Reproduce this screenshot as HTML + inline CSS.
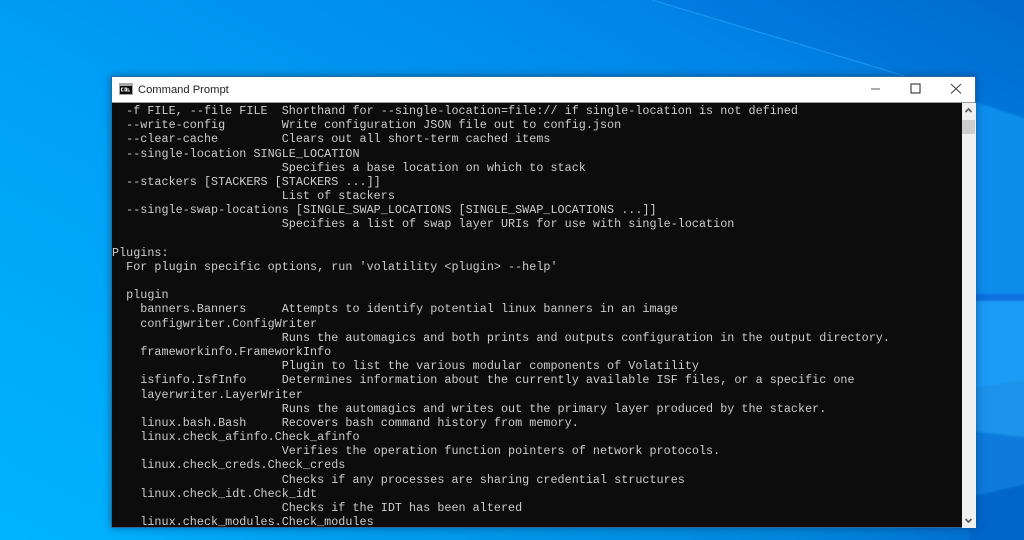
<!DOCTYPE html>
<html>
<head>
<meta charset="utf-8">
<style>
html,body{margin:0;padding:0;width:1024px;height:540px;overflow:hidden;background:#0097f0}
.abs{position:absolute}
#win{left:111px;top:76px;width:865px;height:451.500px;background:#fff;box-shadow:0 0 8px rgba(0,40,90,.5);outline:1px solid #2c6a94;outline-offset:-1px}
#title{left:138px;top:83px;font:11.2px/14px "Liberation Sans",sans-serif;color:#222;white-space:pre}
#con{left:112px;top:103px;width:850px;height:424px;background:#0c0c0c;overflow:hidden}
#con div{position:absolute;left:0;height:14px;margin-top:1px;font:11.75px/14px "Liberation Mono",monospace;letter-spacing:.021px;color:#cccccc;white-space:pre;filter:blur(.25px)}
#sb{left:962px;top:103px;width:14px;height:424.500px;background:#f0f0f0}
</style>
</head>
<body>
<svg class="abs" style="left:0;top:0" width="1024" height="540" viewBox="0 0 1024 540">
<defs>
<linearGradient id="g" x1="0" y1="1" x2="1" y2="0">
<stop offset="0" stop-color="#00b4ff"/>
<stop offset=".45" stop-color="#00a0f6"/>
<stop offset=".8" stop-color="#0086e8"/>
<stop offset="1" stop-color="#0068cc"/>
</linearGradient>
<linearGradient id="b" x1="0" y1="0" x2="1" y2="0">
<stop offset="0" stop-color="#0090e0" stop-opacity="0"/>
<stop offset=".3" stop-color="#0094e4" stop-opacity=".6"/>
<stop offset=".8" stop-color="#0086dc"/>
<stop offset="1" stop-color="#0470d0"/>
</linearGradient>
<filter id="s" x="-10%" y="-10%" width="120%" height="120%"><feGaussianBlur stdDeviation="1"/></filter>
</defs>
<rect width="1024" height="540" fill="url(#g)"/>
<polygon points="650,0 1024,0 1024,150 905,76" fill="#0070d8" opacity=".35"/>
<rect x="100" y="520" width="880" height="20" fill="url(#b)"/>
<g filter="url(#s)">
<polygon points="970,100 1030,120 1030,296 970,296" fill="#0a8eec"/>
<rect x="970" y="294" width="60" height="7" fill="#0a70de"/>
<polygon points="970,301 1030,301 1030,380 970,388" fill="#1a9cf4"/>
<polygon points="970,388 1030,380 1030,438 970,431" fill="#1a92ea"/>
<polygon points="970,431 1030,438 1030,483 970,497" fill="#0a7adc"/>
<polygon points="970,497 1030,483 1030,545 970,545" fill="#0666c8"/>
</g>
<line x1="652" y1="0" x2="905" y2="76" stroke="#1f9cf4" stroke-width="1.200" opacity=".8"/>
</svg>

<div id="win" class="abs"></div>
<div class="abs" style="left:112px;top:102px;width:863px;height:1px;background:#a0a0a0"></div>

<svg class="abs" style="left:119px;top:83px" width="14" height="12" viewBox="0 0 14 12">
<rect width="14" height="12" fill="#a8a8a8"/>
<rect x="1" y="3" width="12" height="8" fill="#0c0c0c"/>
<path d="M2.500 5H4.500M2.500 5V8H4.500M6 5H7.500V8H6ZM9 5V8H11" stroke="#e8e8e8" stroke-width="1" fill="none"/>
</svg>
<div id="title" class="abs">Command Prompt</div>

<svg class="abs" style="left:860px;top:76px" width="116" height="27" viewBox="0 0 116 27">
<path d="M11 13H20" stroke="#8a8a8a" stroke-width="1.400" fill="none"/>
<rect x="51" y="8" width="9" height="9" stroke="#333" stroke-width="1.100" fill="none"/>
<path d="M91 8L101 17.500M101 8L91 17.500" stroke="#444" stroke-width="1.100" fill="none"/>
</svg>

<div id="con" class="abs">
<div style="top:0px">  -f FILE, --file FILE  Shorthand for --single-location=file:// if single-location is not defined</div>
<div style="top:14.200px">  --write-config        Write configuration JSON file out to config.json</div>
<div style="top:28.300px">  --clear-cache         Clears out all short-term cached items</div>
<div style="top:42.500px">  --single-location SINGLE_LOCATION</div>
<div style="top:56.700px">                        Specifies a base location on which to stack</div>
<div style="top:70.900px">  --stackers [STACKERS [STACKERS ...]]</div>
<div style="top:85px">                        List of stackers</div>
<div style="top:99.200px">  --single-swap-locations [SINGLE_SWAP_LOCATIONS [SINGLE_SWAP_LOCATIONS ...]]</div>
<div style="top:113.400px">                        Specifies a list of swap layer URIs for use with single-location</div>
<div style="top:141.700px">Plugins:</div>
<div style="top:155.900px">  For plugin specific options, run 'volatility &lt;plugin&gt; --help'</div>
<div style="top:184.300px">  plugin</div>
<div style="top:198.400px">    banners.Banners     Attempts to identify potential linux banners in an image</div>
<div style="top:212.600px">    configwriter.ConfigWriter</div>
<div style="top:226.800px">                        Runs the automagics and both prints and outputs configuration in the output directory.</div>
<div style="top:241px">    frameworkinfo.FrameworkInfo</div>
<div style="top:255.100px">                        Plugin to list the various modular components of Volatility</div>
<div style="top:269.300px">    isfinfo.IsfInfo     Determines information about the currently available ISF files, or a specific one</div>
<div style="top:283.500px">    layerwriter.LayerWriter</div>
<div style="top:297.700px">                        Runs the automagics and writes out the primary layer produced by the stacker.</div>
<div style="top:311.800px">    linux.bash.Bash     Recovers bash command history from memory.</div>
<div style="top:326px">    linux.check_afinfo.Check_afinfo</div>
<div style="top:340.200px">                        Verifies the operation function pointers of network protocols.</div>
<div style="top:354.400px">    linux.check_creds.Check_creds</div>
<div style="top:368.500px">                        Checks if any processes are sharing credential structures</div>
<div style="top:382.700px">    linux.check_idt.Check_idt</div>
<div style="top:396.900px">                        Checks if the IDT has been altered</div>
<div style="top:411.100px">    linux.check_modules.Check_modules</div>
</div>

<div id="sb" class="abs"></div>
<div class="abs" style="left:962px;top:120px;width:13px;height:14px;background:#cdcdcd"></div>
<svg class="abs" style="left:962px;top:103px" width="13" height="14" viewBox="0 0 13 14">
<path d="M3.500 9L6.500 6L9.500 9" stroke="#606060" stroke-width="1.800" fill="none"/>
</svg>
<svg class="abs" style="left:962px;top:513px" width="13" height="14" viewBox="0 0 13 14">
<path d="M3.500 6L6.500 9L9.500 6" stroke="#606060" stroke-width="1.800" fill="none"/>
</svg>
</body>
</html>
